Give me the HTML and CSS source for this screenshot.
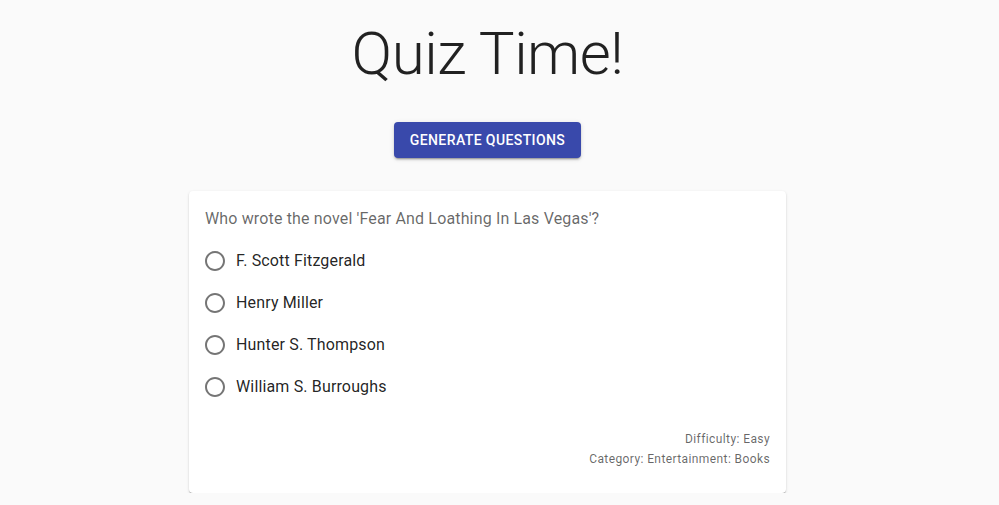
FILE: index.html
```html
<!DOCTYPE html>
<html lang="en">
<head>
<meta charset="utf-8">
<title>Quiz Time!</title>
<link rel="stylesheet" href="styles.css">
</head>
<body>
<div class="page">
  <h1 class="title">Quiz Time!</h1>
  <button class="btn">Generate Questions</button>
  <div class="card">
    <div class="question">Who wrote the novel 'Fear And Loathing In Las Vegas'?</div>
    <div class="options">
      <label class="option">
        <span class="radio"><svg viewBox="0 0 24 24" width="24" height="24"><path d="M12 2C6.48 2 2 6.48 2 12s4.48 10 10 10 10-4.48 10-10S17.52 2 12 2zm0 18c-4.42 0-8-3.58-8-8s3.58-8 8-8 8 3.58 8 8-3.58 8-8 8z"/></svg></span>
        <span class="label">F. Scott Fitzgerald</span>
      </label>
      <label class="option">
        <span class="radio"><svg viewBox="0 0 24 24" width="24" height="24"><path d="M12 2C6.48 2 2 6.48 2 12s4.48 10 10 10 10-4.48 10-10S17.52 2 12 2zm0 18c-4.42 0-8-3.58-8-8s3.58-8 8-8 8 3.58 8 8-3.58 8-8 8z"/></svg></span>
        <span class="label">Henry Miller</span>
      </label>
      <label class="option">
        <span class="radio"><svg viewBox="0 0 24 24" width="24" height="24"><path d="M12 2C6.48 2 2 6.48 2 12s4.48 10 10 10 10-4.48 10-10S17.52 2 12 2zm0 18c-4.42 0-8-3.58-8-8s3.58-8 8-8 8 3.58 8 8-3.58 8-8 8z"/></svg></span>
        <span class="label">Hunter S. Thompson</span>
      </label>
      <label class="option">
        <span class="radio"><svg viewBox="0 0 24 24" width="24" height="24"><path d="M12 2C6.48 2 2 6.48 2 12s4.48 10 10 10 10-4.48 10-10S17.52 2 12 2zm0 18c-4.42 0-8-3.58-8-8s3.58-8 8-8 8 3.58 8 8-3.58 8-8 8z"/></svg></span>
        <span class="label">William S. Burroughs</span>
      </label>
    </div>
    <div class="meta">
      <div>Difficulty: Easy</div>
      <div>Category: Entertainment: Books</div>
    </div>
  </div>
</div>
</body>
</html>
```
FILE: styles.css
```css
html, body {
  margin: 0;
  padding: 0;
  background: #fafafa;
}
body {
  font-family: Roboto, "Helvetica Neue", Arial, sans-serif;
  color: rgba(0, 0, 0, 0.87);
}
.page {
  width: 975px;
  display: flex;
  flex-direction: column;
  align-items: center;
  padding-top: 18px;
}
.title {
  margin: 0;
  font-size: 60px;
  font-weight: 300;
  line-height: 72px;
  letter-spacing: -0.5px;
  color: rgba(0, 0, 0, 0.87);
}
.btn {
  margin-top: 32px;
  height: 36px;
  padding: 6px 16px;
  border: none;
  border-radius: 4px;
  background: #3949ab;
  color: #fff;
  font-family: Roboto, Arial, sans-serif;
  font-size: 14px;
  font-weight: 500;
  letter-spacing: 0.4px;
  text-transform: uppercase;
  line-height: 24px;
  box-shadow: 0 3px 1px -2px rgba(0,0,0,0.2), 0 2px 2px 0 rgba(0,0,0,0.14), 0 1px 5px 0 rgba(0,0,0,0.12);
}
.card {
  margin-top: 33px;
  width: 597px;
  box-sizing: border-box;
  background: #fff;
  border-radius: 4px;
  padding: 16px 16px 24px;
  box-shadow: 0 2px 1px -1px rgba(0,0,0,0.25), 0 1px 1px 0 rgba(0,0,0,0.16), 0 1px 3px 0 rgba(0,0,0,0.12);
}
.question {
  font-size: 16px;
  line-height: 24px;
  color: rgba(0, 0, 0, 0.6);
  letter-spacing: 0.15px;
}
.options {
  display: flex;
  flex-direction: column;
  margin-top: 9px;
}
.option {
  display: flex;
  align-items: center;
  margin-left: -11px;
  height: 42px;
}
.radio {
  width: 42px;
  height: 42px;
  display: flex;
  align-items: center;
  justify-content: center;
}
.radio svg {
  fill: rgba(0, 0, 0, 0.54);
}
.label {
  font-size: 16px;
  line-height: 24px;
  letter-spacing: 0.15px;
}
.meta {
  margin-top: 22px;
  text-align: right;
  font-size: 12px;
  line-height: 19.5px;
  letter-spacing: 0.4px;
  color: rgba(0, 0, 0, 0.6);
}
```
